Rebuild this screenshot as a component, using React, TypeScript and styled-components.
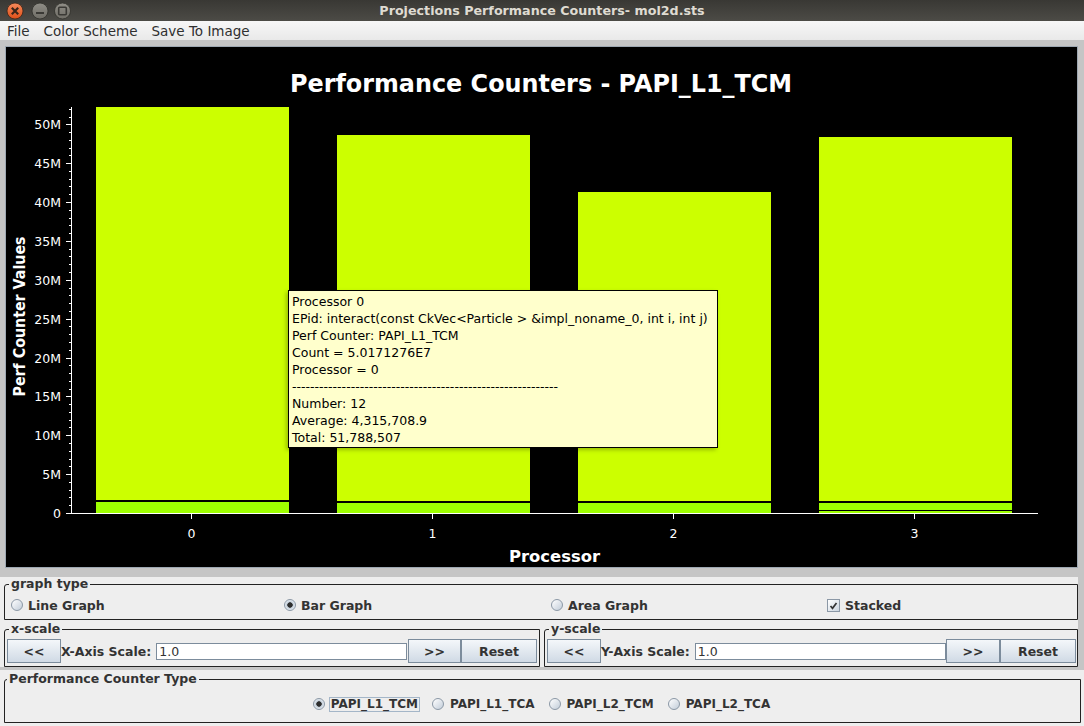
import React from "react";
import styled, { createGlobalStyle } from "styled-components";

const LIME = "#ccff00";
const GREEN = "#9eff00";
const UI_FONT = `"DejaVu Sans", "Liberation Sans", sans-serif`;

const GlobalStyle = createGlobalStyle`
  html, body {
    margin: 0;
    padding: 0;
    background: #c5c5c5;
  }
  body {
    font-family: ${UI_FONT};
  }
`;

type Seg = { y0: number; y1: number; c: string };

const bars: { x: number; segs: Seg[] }[] = [
  { x: 96, segs: [{ y0: 107, y1: 500, c: LIME }, { y0: 502, y1: 513, c: GREEN }] },
  { x: 337, segs: [{ y0: 135, y1: 501, c: LIME }, { y0: 503, y1: 513, c: GREEN }] },
  { x: 578, segs: [{ y0: 192, y1: 501, c: LIME }, { y0: 502.5, y1: 513, c: GREEN }] },
  {
    x: 819,
    segs: [
      { y0: 137, y1: 501, c: LIME },
      { y0: 503, y1: 510, c: GREEN },
      { y0: 511, y1: 513, c: GREEN },
    ],
  },
];

const BAR_W = 193;
const AXIS_Y = 513;
const PX_PER_M = 7.774;

const tooltipLines = [
  "Processor 0",
  "EPid: interact(const CkVec<Particle > &impl_noname_0, int i, int j)",
  "Perf Counter: PAPI_L1_TCM",
  "Count = 5.0171276E7",
  "Processor = 0",
  "-".repeat(59),
  "Number: 12",
  "Average: 4,315,708.9",
  "Total: 51,788,507",
];

const counterTypes = ["PAPI_L1_TCM", "PAPI_L1_TCA", "PAPI_L2_TCM", "PAPI_L2_TCA"];

const WindowButtons = () => (
  <svg width="72" height="21" viewBox="0 0 72 21">
    <defs>
      <linearGradient id="closeG" x1="0" y1="0" x2="0" y2="1">
        <stop offset="0" stopColor="#f58a5c" />
        <stop offset="1" stopColor="#df4f18" />
      </linearGradient>
      <linearGradient id="greyG" x1="0" y1="0" x2="0" y2="1">
        <stop offset="0" stopColor="#8f8d86" />
        <stop offset="1" stopColor="#6f6d66" />
      </linearGradient>
    </defs>
    <circle cx="15" cy="11" r="8" fill="url(#closeG)" stroke="#3a2418" strokeWidth="0.8" />
    <path d="M11.8 7.8 L18.2 14.2 M18.2 7.8 L11.8 14.2" stroke="#3b2519" strokeWidth="2.2" />
    <circle cx="40" cy="11" r="8" fill="url(#greyG)" stroke="#2f2e2a" strokeWidth="0.8" />
    <rect x="36" y="12" width="8" height="2" fill="#3a3935" />
    <circle cx="62.5" cy="11" r="8" fill="url(#greyG)" stroke="#2f2e2a" strokeWidth="0.8" />
    <rect x="58.7" y="7.2" width="7.6" height="7.6" rx="1" fill="none" stroke="#3a3935" strokeWidth="1.6" />
  </svg>
);

const CheckMark = () => (
  <svg width="9" height="9" viewBox="0 0 9 9">
    <path d="M1.5 5 L3.5 7.3 L7.5 2" fill="none" stroke="#333" strokeWidth="1.7" />
  </svg>
);

const Chart = () => {
  const ticks = Array.from({ length: 53 }, (_, i) => i);
  return (
    <svg width="1071" height="520" viewBox="6 47 1071 520" shapeRendering="crispEdges">
      <text
        x="541"
        y="92"
        fill="#fff"
        fontFamily="DejaVu Sans"
        fontWeight="bold"
        fontSize="24"
        textAnchor="middle"
        textLength="502"
        lengthAdjust="spacingAndGlyphs"
      >
        Performance Counters - PAPI_L1_TCM
      </text>

      {bars.map((b) =>
        b.segs.map((s, i) => (
          <rect key={`${b.x}-${i}`} x={b.x} y={s.y0} width={BAR_W} height={s.y1 - s.y0} fill={s.c} />
        ))
      )}

      <line x1="71.5" y1="107" x2="71.5" y2={AXIS_Y} stroke="#fff" />
      {ticks.map((i) => {
        const y = Math.round(AXIS_Y - i * PX_PER_M) + 0.5;
        const major = i % 5 === 0;
        return <line key={i} x1={major ? 66 : 69} y1={y} x2="72" y2={y} stroke="#fff" />;
      })}
      {ticks
        .filter((i) => i % 5 === 0)
        .map((i) => (
          <text
            key={i}
            x="61"
            y={Math.round(AXIS_Y - i * PX_PER_M) + 5}
            fill="#fff"
            fontFamily="DejaVu Sans"
            fontSize="12.5"
            textAnchor="end"
          >
            {i === 0 ? "0" : `${i}M`}
          </text>
        ))}

      <line x1="66" y1={AXIS_Y + 0.5} x2="1038" y2={AXIS_Y + 0.5} stroke="#fff" />
      {bars.map((b, i) => {
        const cx = Math.floor(b.x + BAR_W / 2) - 0.5;
        return (
          <g key={i}>
            <line x1={cx} y1={AXIS_Y} x2={cx} y2={AXIS_Y + 6} stroke="#fff" />
            <text x={cx} y="538" fill="#fff" fontFamily="DejaVu Sans" fontSize="12.5" textAnchor="middle">
              {i}
            </text>
          </g>
        );
      })}

      <text
        x="554.5"
        y="562"
        fill="#fff"
        fontFamily="DejaVu Sans"
        fontWeight="bold"
        fontSize="16"
        textAnchor="middle"
        textLength="91"
        lengthAdjust="spacingAndGlyphs"
      >
        Processor
      </text>
      <text
        transform="translate(25 316.5) rotate(-90)"
        fill="#fff"
        fontFamily="DejaVu Sans"
        fontWeight="bold"
        fontSize="15.5"
        textAnchor="middle"
        textLength="160"
        lengthAdjust="spacingAndGlyphs"
      >
        Perf Counter Values
      </text>
    </svg>
  );
};

const App: React.FC = () => {
  return (
    <Window>
      <GlobalStyle />
      <TitleBar>
        <WindowButtons />
        <WindowTitle>Projections Performance Counters- mol2d.sts</WindowTitle>
        <span />
      </TitleBar>
      <MenuBar>
        <MenuItem>File</MenuItem>
        <MenuItem>Color Scheme</MenuItem>
        <MenuItem>Save To Image</MenuItem>
      </MenuBar>

      <ChartArea>
        <ChartPanel>
          <Chart />
          <Tooltip>
            {tooltipLines.map((l, i) => (
              <div key={i}>{l}</div>
            ))}
          </Tooltip>
        </ChartPanel>
      </ChartArea>

      <ControlsArea>
        <ControlsPanel>
          <Group>
            <Caption $inset={4}>graph type</Caption>
            <GraphTypeRow>
              <Option>
                <Radio />
                Line Graph
              </Option>
              <Option>
                <Radio $on />
                Bar Graph
              </Option>
              <Option>
                <Radio />
                Area Graph
              </Option>
              <Option>
                <CheckBox>
                  <CheckMark />
                </CheckBox>
                Stacked
              </Option>
            </GraphTypeRow>
          </Group>

          <ScaleRow>
            <Group $w={536}>
              <Caption $inset={4}>x-scale</Caption>
              <ScaleBody>
                <NavButton $w={54}>&lt;&lt;</NavButton>
                <ScaleLabel>X-Axis Scale:</ScaleLabel>
                <ScaleField defaultValue="1.0" />
                <NavButton $w={53} $gap={1}>&gt;&gt;</NavButton>
                <NavButton $w={76}>Reset</NavButton>
              </ScaleBody>
            </Group>
            <Group $grow>
              <Caption $inset={4}>y-scale</Caption>
              <ScaleBody $right={1}>
                <NavButton $w={54}>&lt;&lt;</NavButton>
                <ScaleLabel>Y-Axis Scale:</ScaleLabel>
                <ScaleField defaultValue="1.0" />
                <NavButton $w={54}>&gt;&gt;</NavButton>
                <NavButton $w={76}>Reset</NavButton>
              </ScaleBody>
            </Group>
          </ScaleRow>
        </ControlsPanel>
      </ControlsArea>

      <CounterArea>
        <Group $w={1077}>
          <Caption $inset={2}>Performance Counter Type</Caption>
          <CounterRow>
            {counterTypes.map((c, i) => (
              <CounterOption key={c}>
                <Radio $on={i === 0} />
                <CounterText $focus={i === 0}>{c}</CounterText>
              </CounterOption>
            ))}
          </CounterRow>
        </Group>
      </CounterArea>
    </Window>
  );
};

export default App;

const Window = styled.div`
  width: 1084px;
  height: 726px;
  display: flex;
  flex-direction: column;
  overflow: hidden;
  background: #eeeeee;
`;

const TitleBar = styled.div`
  height: 21px;
  flex: none;
  display: grid;
  grid-template-columns: 1fr auto 1fr;
  align-items: center;
  background: linear-gradient(#393834, #4c4b46);
`;

const WindowTitle = styled.div`
  font: bold 12.7px ${UI_FONT};
  color: #dfdbd2;
  white-space: nowrap;
`;

const MenuBar = styled.div`
  height: 19px;
  flex: none;
  display: flex;
  align-items: center;
  gap: 14px;
  padding-left: 7px;
  background: linear-gradient(#f7f7f7, #e9e9e9);
`;

const MenuItem = styled.span`
  font: 13.5px ${UI_FONT};
  color: #2f2f2f;
`;

const ChartArea = styled.div`
  height: 537px;
  flex: none;
  box-sizing: border-box;
  padding: 6px 6px 9px 5px;
  background: #c5c5c5;
  display: flex;
`;

const ChartPanel = styled.div`
  position: relative;
  flex: 1;
  background: #000;
  border: 1px solid #9ea8b2;
  svg {
    display: block;
  }
`;

const Tooltip = styled.div`
  position: absolute;
  left: 282px;
  top: 243px;
  width: 430px;
  height: 158px;
  box-sizing: border-box;
  padding: 2px 3px;
  background: #ffffcc;
  border: 1px solid #000;
  box-shadow: -2px 2px 4px rgba(0, 0, 0, 0.25);
  font: 12.5px/17px ${UI_FONT};
  color: #000;
  white-space: nowrap;
`;

const ControlsArea = styled.div`
  height: 93px;
  flex: none;
  box-sizing: border-box;
  padding: 0 6px 3px 0;
  background: #c5c5c5;
`;

const ControlsPanel = styled.div`
  height: 90px;
  box-sizing: border-box;
  padding-left: 4px;
  background: #eeeeee;
  display: flex;
  flex-direction: column;
`;

const Group = styled.fieldset<{ $w?: number; $grow?: boolean }>`
  margin: 0;
  padding: 0;
  min-width: 0;
  border: 1px solid #222;
  border-top-left-radius: 3px;
  box-sizing: border-box;
  ${(p) => (p.$w ? `width: ${p.$w}px; flex: none;` : "")}
  ${(p) => (p.$grow ? "flex: 1;" : "")}
`;

const Caption = styled.legend<{ $inset: number }>`
  margin-left: ${(p) => p.$inset}px;
  padding: 0 2px;
  font: bold 12.5px/14px ${UI_FONT};
  color: #333;
`;

const GraphTypeRow = styled.div`
  height: 28px;
  display: grid;
  grid-template-columns: 273px 267px 276px 1fr;
  align-items: center;
  padding-left: 6px;
`;

const Option = styled.label`
  display: flex;
  align-items: center;
  gap: 5px;
  font: bold 12.5px ${UI_FONT};
  color: #333;
`;

const Radio = styled.span<{ $on?: boolean }>`
  flex: none;
  width: 12px;
  height: 12px;
  box-sizing: border-box;
  border-radius: 50%;
  border: 1px solid #8b98a6;
  background: ${(p) =>
    p.$on
      ? "radial-gradient(circle, #2e2e2e 0 2.4px, #c3ced9 3px, #e4eaf0 5px, #f6f8fa 6px)"
      : "linear-gradient(135deg, #ffffff, #c2cdd9)"};
`;

const CheckBox = styled.span`
  flex: none;
  width: 13px;
  height: 13px;
  box-sizing: border-box;
  border: 1px solid #8b98a6;
  background: linear-gradient(135deg, #ffffff, #cbd5df);
  display: flex;
  align-items: center;
  justify-content: center;
`;

const ScaleRow = styled.div`
  margin-top: 2px;
  display: flex;
  gap: 4px;
`;

const ScaleBody = styled.div<{ $right?: number }>`
  height: 30px;
  box-sizing: border-box;
  display: flex;
  align-items: center;
  padding: 0 ${(p) => p.$right ?? 2}px 0 2px;
`;

const NavButton = styled.button<{ $w: number; $gap?: number }>`
  flex: none;
  width: ${(p) => p.$w}px;
  height: 24px;
  margin-left: ${(p) => p.$gap ?? 0}px;
  padding: 0;
  box-sizing: border-box;
  border: 1px solid #7c8c9c;
  border-radius: 0;
  background: linear-gradient(#f4f7fa, #d0dae5);
  font: bold 12.5px ${UI_FONT};
  color: #333;
`;

const ScaleLabel = styled.span`
  flex: none;
  margin-right: 5px;
  font: bold 12.5px ${UI_FONT};
  color: #333;
`;

const ScaleField = styled.input`
  flex: 1;
  min-width: 0;
  height: 17px;
  box-sizing: border-box;
  border: 1px solid #7c8c9c;
  padding: 0 2px;
  background: #fff;
  font: 12.5px ${UI_FONT};
  color: #333;
  outline: none;
`;

const CounterArea = styled.div`
  flex: 1;
  padding: 2px 0 0 4px;
  background: #eeeeee;
`;

const CounterRow = styled.div`
  height: 36px;
  display: flex;
  align-items: center;
  justify-content: center;
  gap: 12px;
`;

const CounterOption = styled.label`
  display: flex;
  align-items: center;
  gap: 4px;
  font: bold 12px ${UI_FONT};
  color: #333;
`;

const CounterText = styled.span<{ $focus?: boolean }>`
  padding: 0 1px;
  line-height: 13px;
  border: 1px solid ${(p) => (p.$focus ? "#a4b6c8" : "transparent")};
`;
